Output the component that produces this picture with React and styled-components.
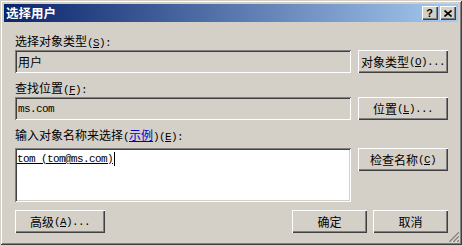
import React from "react";
import styled, { createGlobalStyle } from "styled-components";

const GlobalStyle = createGlobalStyle`
  body {
    margin: 0;
    background: #d4d0c8;
  }
`;

const raised = `
  box-shadow: inset 1px 1px #ffffff, inset -1px -1px #404040,
    inset -2px -2px #808080;
`;
const sunken = `
  box-shadow: inset 1px 1px #808080, inset -1px -1px #ffffff,
    inset 2px 2px #404040, inset -2px -2px #d4d0c8;
`;

const Window = styled.div`
  position: relative;
  width: 462px;
  height: 245px;
  box-sizing: border-box;
  padding: 4px;
  display: flex;
  flex-direction: column;
  background: #d4d0c8;
  box-shadow: inset 1px 1px #d4d0c8, inset -1px -1px #404040,
    inset 2px 2px #ffffff, inset -2px -2px #808080;
  font-family: "Noto Sans CJK SC", "Liberation Sans", sans-serif;
  font-size: 12px;
  color: #000;
`;
const TitleBar = styled.div`
  height: 18px;
  display: flex;
  align-items: center;
  padding: 0 2px;
  background: linear-gradient(to right, #0a246a, #a6caf0);
`;
const Title = styled.div`
  flex: 1;
  color: #fff;
  font-weight: bold;
  font-size: 12.5px;
  line-height: 18px;
`;
const Caps = styled.div`
  display: flex;
  gap: 2px;
`;
const CapButton = styled.div`
  width: 16px;
  height: 14px;
  box-sizing: border-box;
  display: flex;
  align-items: center;
  justify-content: center;
  background: #d4d0c8;
  ${raised}
  font-family: "Liberation Sans", sans-serif;
  font-weight: bold;
  font-size: 11px;
  line-height: 14px;
  padding-right: 1px;
`;
const Content = styled.div`
  flex: 1;
  display: flex;
  flex-direction: column;
  padding: 10px 10px 0 11px;
`;
const Label = styled.div`
  height: 18px;
  line-height: 18px;
  margin-top: ${(p) => p.top || 0}px;
  margin-bottom: ${(p) => p.bottom || 0}px;
  white-space: nowrap;
`;
const Row = styled.div`
  display: grid;
  grid-template-columns: 336px 90px;
  column-gap: 7px;
  align-items: start;
`;
const Field = styled.div`
  height: ${(p) => p.h || 23}px;
  box-sizing: border-box;
  padding: ${(p) => (p.multi ? "4px 2px" : "0 3px")};
  display: flex;
  align-items: ${(p) => (p.multi ? "flex-start" : "center")};
  background: ${(p) => (p.white ? "#ffffff" : "#d4d0c8")};
  ${sunken}
`;
const Mono = styled.span`
  font-family: "Liberation Mono", monospace;
  font-size: 11px;
  letter-spacing: -0.6px;
  line-height: 14px;
`;
const Resolved = styled(Mono)`
  text-decoration: underline;
  border-right: 1px solid #000;
  padding-right: 1px;
`;
const Button = styled.div`
  width: ${(p) => p.w || 90}px;
  height: 23px;
  box-sizing: border-box;
  display: flex;
  align-items: center;
  justify-content: center;
  background: #d4d0c8;
  ${raised}
  white-space: nowrap;
`;
const Acc = styled.span`
  text-decoration: underline;
`;
const Link = styled.span`
  color: #0000cc;
  text-decoration: underline;
`;
const Footer = styled.div`
  margin-top: 8px;
  display: flex;
  gap: 6px;
`;
const Spacer = styled.div`
  flex: 1;
`;
const Grip = styled.svg`
  position: absolute;
  right: 3px;
  bottom: 3px;
`;

const Key = ({ k, tail = "" }) => (
  <Mono>
    (<Acc>{k}</Acc>){tail}
  </Mono>
);

const CloseGlyph = () => (
  <svg width="8" height="7" viewBox="0 0 8 7">
    <path d="M0.5 0.5 L7.5 6.5 M7.5 0.5 L0.5 6.5" stroke="#000" strokeWidth="1.6" />
  </svg>
);

export default function App() {
  return (
    <>
      <GlobalStyle />
      <Window>
        <TitleBar>
          <Title>选择用户</Title>
          <Caps>
            <CapButton>?</CapButton>
            <CapButton>
              <CloseGlyph />
            </CapButton>
          </Caps>
        </TitleBar>
        <Content>
          <Label>
            选择对象类型<Key k="S" tail=":" />
          </Label>
          <Row>
            <Field>用户</Field>
            <Button>
              对象类型<Key k="O" tail="..." />
            </Button>
          </Row>
          <Label top={6}>
            查找位置<Key k="F" tail=":" />
          </Label>
          <Row>
            <Field>
              <Mono>ms.com</Mono>
            </Field>
            <Button>
              位置<Key k="L" tail="..." />
            </Button>
          </Row>
          <Label top={6} bottom={4}>
            输入对象名称来选择<Mono>(</Mono>
            <Link>示例</Link>
            <Mono>)</Mono>
            <Key k="E" tail=":" />
          </Label>
          <Row>
            <Field white multi h={54}>
              <Resolved>tom (tom@ms.com)</Resolved>
            </Field>
            <Button>
              检查名称<Key k="C" />
            </Button>
          </Row>
          <Footer>
            <Button>
              高级<Key k="A" tail="..." />
            </Button>
            <Spacer />
            <Button w={75}>确定</Button>
            <Button w={75}>取消</Button>
          </Footer>
        </Content>
        <Grip width="12" height="12" viewBox="0 0 12 12">
          {[0, 4, 8].map((o) => (
            <g key={o}>
              <line x1={o + 1} y1="12" x2="12" y2={o + 1} stroke="#ffffff" strokeWidth="1" />
              <line x1={o + 2} y1="12" x2="12" y2={o + 2} stroke="#808080" strokeWidth="1.5" />
            </g>
          ))}
        </Grip>
      </Window>
    </>
  );
}
